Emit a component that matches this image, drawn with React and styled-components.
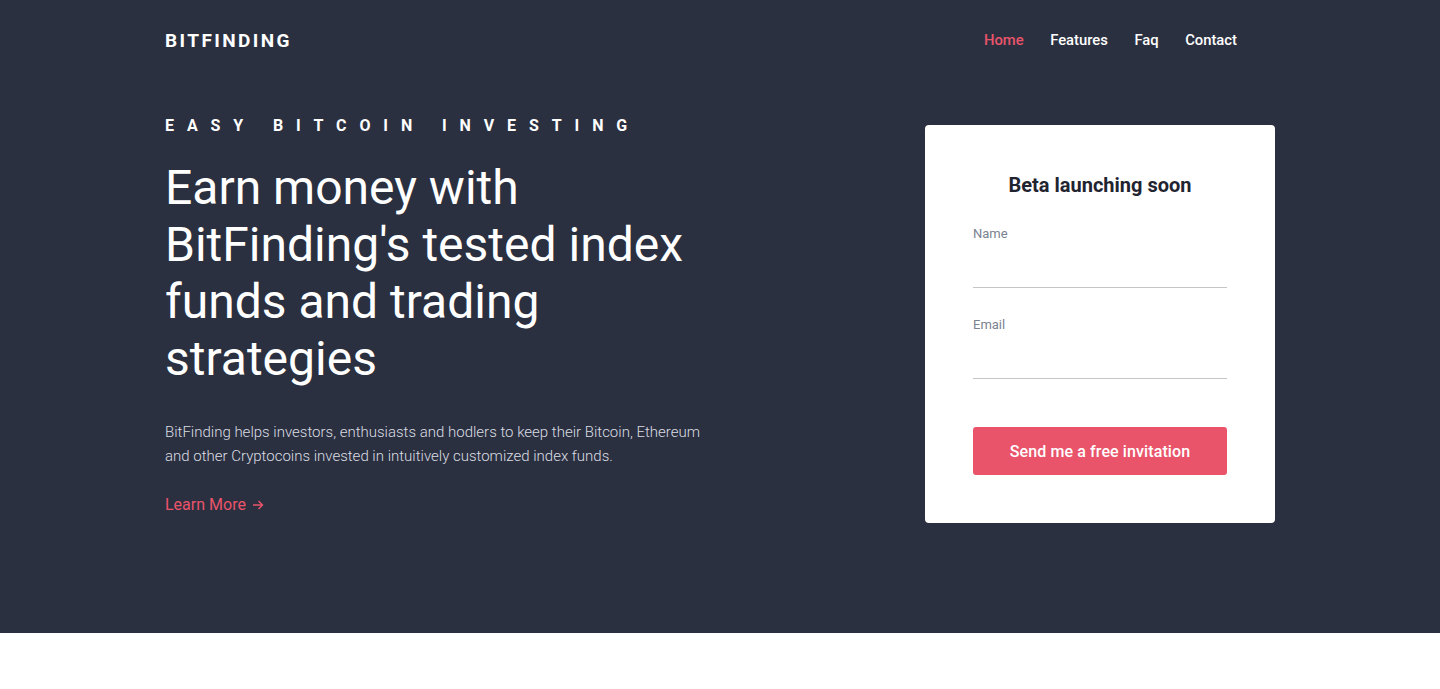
import React from 'react'
import styled, { createGlobalStyle } from 'styled-components'

const GlobalStyle = createGlobalStyle`
  * { box-sizing: border-box; }
  body {
    margin: 0;
    font-family: Roboto, "Liberation Sans", sans-serif;
    background: #fff;
  }
`

const Hero = styled.section`
  background: #2b3040;
  height: 633px;
`

const Container = styled.div`
  width: 1110px;
  margin: 0 auto;
`

const Header = styled.header`
  display: flex;
  justify-content: space-between;
  align-items: center;
  height: 80px;
`

const Logo = styled.div`
  color: #fff;
  font-size: 19px;
  font-weight: 700;
  letter-spacing: 2.4px;
`

const Nav = styled.nav`
  display: flex;
  gap: 26.5px;
  margin-right: 38px;
`

const NavLink = styled.a`
  color: ${p => (p.active ? '#e9546b' : '#fff')};
  font-size: 14.8px;
  font-weight: 500;
  text-decoration: none;
`

const Row = styled.div`
  display: flex;
  justify-content: space-between;
  align-items: flex-start;
  padding-top: 37px;
`

const Left = styled.div`
  width: 540px;
`

const Eyebrow = styled.div`
  color: #fff;
  font-size: 16px;
  font-weight: 700;
  letter-spacing: 12.9px;
  line-height: 18px;
`

const Title = styled.h1`
  color: #fff;
  font-size: 48px;
  font-weight: 400;
  line-height: 57px;
  margin: 24px 0 0;
`

const Lead = styled.p`
  color: #dadde3;
  font-size: 15px;
  line-height: 24px;
  font-weight: 300;
  margin: 33px 0 0;
`

const More = styled.a`
  display: inline-flex;
  align-items: center;
  gap: 6px;
  color: #e9546b;
  font-size: 16px;
  margin-top: 27px;
  text-decoration: none;
`

const Card = styled.div`
  width: 350px;
  background: #fff;
  border-radius: 4px;
  padding: 48px;
  margin-top: 8px;
`

const CardTitle = styled.h3`
  margin: 0;
  text-align: center;
  color: #1f2430;
  font-size: 20px;
  font-weight: 700;
  line-height: 24px;
`

const Field = styled.label`
  display: block;
  margin-top: 29px;
`

const Label = styled.span`
  display: block;
  font-size: 13px;
  color: #7a8290;
  line-height: 16px;
`

const Input = styled.input`
  display: block;
  width: 100%;
  height: 46px;
  border: 0;
  border-bottom: 1px solid #c5c5c5;
  outline: none;
  font-family: inherit;
  font-size: 15px;
  background: transparent;
`

const Button = styled.button`
  display: block;
  width: 100%;
  height: 48px;
  margin-top: 48px;
  border: 0;
  border-radius: 3px;
  background: #e9546b;
  color: #fff;
  font-family: inherit;
  font-size: 16px;
  font-weight: 500;
  letter-spacing: 0.1px;
`

export default function App() {
  return (
    <>
      <GlobalStyle />
      <Hero>
        <Container>
          <Header>
            <Logo>BITFINDING</Logo>
            <Nav>
              <NavLink active>Home</NavLink>
              <NavLink>Features</NavLink>
              <NavLink>Faq</NavLink>
              <NavLink>Contact</NavLink>
            </Nav>
          </Header>
          <Row>
            <Left>
              <Eyebrow>EASY BITCOIN INVESTING</Eyebrow>
              <Title>Earn money with BitFinding's tested index funds and trading strategies</Title>
              <Lead>
                BitFinding helps investors, enthusiasts and hodlers to keep their Bitcoin, Ethereum
                and other Cryptocoins invested in intuitively customized index funds.
              </Lead>
              <More href="#">
                Learn More
                <svg width="12" height="12" viewBox="0 0 12 12" fill="none" stroke="currentColor" strokeWidth="1.4">
                  <path d="M1 6h9.5M6.5 2l4 4-4 4" />
                </svg>
              </More>
            </Left>
            <Card>
              <CardTitle>Beta launching soon</CardTitle>
              <Field>
                <Label>Name</Label>
                <Input type="text" />
              </Field>
              <Field>
                <Label>Email</Label>
                <Input type="email" />
              </Field>
              <Button>Send me a free invitation</Button>
            </Card>
          </Row>
        </Container>
      </Hero>
    </>
  )
}
